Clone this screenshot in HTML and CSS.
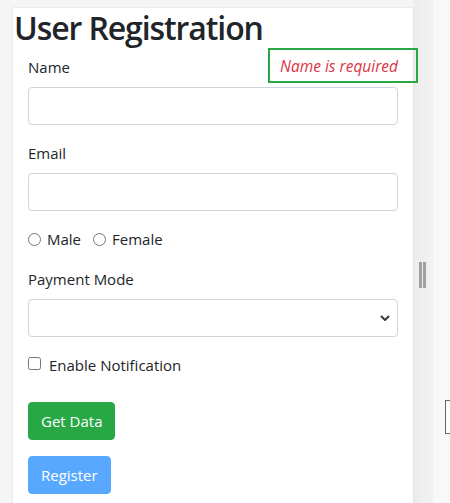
FILE: index.html
```html
<!DOCTYPE html>
<html lang="en">
<head>
<meta charset="utf-8">
<title>User Registration</title>
<link rel="stylesheet" href="styles.css">
</head>
<body>
<div class="page">
  <div class="gutter"></div>
  <main class="card">
    <h2 class="title">User Registration</h2>
    <form class="form">
      <div class="group">
        <label class="label" for="name">Name</label>
        <input class="control" id="name" type="text">
      </div>
      <div class="group">
        <label class="label" for="email">Email</label>
        <input class="control" id="email" type="email">
      </div>
      <div class="group radios">
        <label class="check"><input type="radio" name="gender"> Male</label>
        <label class="check"><input type="radio" name="gender"> Female</label>
      </div>
      <div class="group">
        <label class="label" for="pay">Payment Mode</label>
        <div class="select-wrap">
          <select class="control select" id="pay"><option></option></select>
          <svg class="chev" width="10" height="6" viewBox="0 0 10 6"><path d="M1 1 L5 5 L9 1" fill="none" stroke="#343a40" stroke-width="2"/></svg>
        </div>
      </div>
      <div class="group notif">
        <label class="check"><input type="checkbox"> Enable Notification</label>
      </div>
      <div class="buttons">
        <button type="button" class="btn btn-green">Get Data</button>
        <button type="button" class="btn btn-blue" disabled>Register</button>
      </div>
    </form>
    <div class="error">Name is required</div>
  </main>
  <div class="splitter"><span class="grip"></span></div>
  <div class="side"><span class="sidebox"></span></div>
</div>
</body>
</html>
```
FILE: styles.css
```css
* { box-sizing: border-box; }
html, body { margin: 0; height: 100%; }
body {
  font-family: "Open Sans", "Noto Sans", sans-serif;
  color: #212529;
  background: #f5f5f5;
  overflow: hidden;
}
.page {
  display: flex;
  height: 503px;
}
.gutter {
  width: 13px;
  flex: none;
  background: #f5f5f5;
}
.card {
  position: relative;
  z-index: 2;
  width: 400px;
  flex: none;
  margin-top: 8px;
  padding-top: 1px;
  background: #fff;
  box-shadow: 0 0 2px rgba(0,0,0,0.12);
}
.title {
  margin: 0 0 8px 1px;
  font-size: 32px;
  font-weight: 600;
  line-height: 38.4px;
  letter-spacing: -1.1px;
}
.form {
  padding: 0 15px;
}
.group {
  margin-bottom: 16px;
}
.label {
  display: block;
  font-size: 15px;
  line-height: 24px;
  margin-bottom: 8px;
}
.control {
  display: block;
  width: 100%;
  height: 38px;
  border: 1px solid #ced4da;
  border-radius: 4px;
  background: #fff;
  font: inherit;
  padding: 6px 12px;
}
.select-wrap {
  position: relative;
}
.select {
  appearance: none;
  -webkit-appearance: none;
}
.chev {
  position: absolute;
  right: 8px;
  top: 16px;
}
.radios {
  display: flex;
  gap: 12px;
}
.check {
  display: flex;
  align-items: center;
  font-size: 15px;
  line-height: 24px;
}
.check input {
  margin: 0 6px 0 0;
  width: 13px;
  height: 13px;
}
.notif .check input { margin-right: 8px; position: relative; top: -2px; }
.notif { margin-bottom: 25px; }
.buttons {
  display: flex;
  flex-direction: column;
  align-items: flex-start;
  gap: 16px;
}
.btn {
  font: inherit;
  font-size: 15px;
  line-height: 24px;
  padding: 6px 12px;
  border: 1px solid transparent;
  border-radius: 4px;
  color: #fff;
}
.btn-green { background: #28a745; border-color: #28a745; }
.btn-blue { background: #007bff; border-color: #007bff; opacity: 0.65; }
.error {
  position: absolute;
  z-index: 3;
  left: 255px;
  top: 40px;
  width: 150px;
  height: 35px;
  border: 2px solid #28a745;
  color: #dc3545;
  font-style: italic;
  font-size: 15.5px;
  padding: 5px 0 0 10px;
  line-height: 22px;
  white-space: nowrap;
}
.splitter {
  position: relative;
  width: 20px;
  flex: none;
  background: linear-gradient(to right, #ececec, #f2f2f2);
}
.grip {
  position: absolute;
  left: 6px;
  top: 262px;
  width: 7px;
  height: 26px;
  border-left: 3px solid #a0a0a0;
  border-right: 3px solid #a0a0a0;
}
.side {
  position: relative;
  flex: 1;
  background: #f8f8f8;
}
.sidebox {
  position: absolute;
  left: 12px;
  top: 400px;
  width: 20px;
  height: 34px;
  border: 1px solid #666;
  background: #fff;
}
```
